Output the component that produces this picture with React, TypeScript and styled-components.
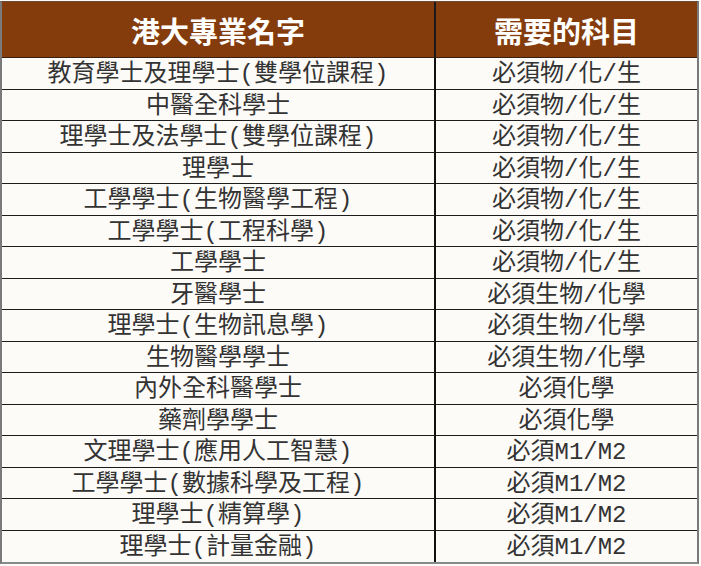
import React from 'react';
import styled, { createGlobalStyle } from 'styled-components';

const GlobalStyle = createGlobalStyle`
  html, body {
    margin: 0;
    padding: 0;
    background: #fbfbf8;
  }
`;

const Page = styled.div`
  padding: 1px 0 0 0;
`;

const Table = styled.div`
  display: grid;
  grid-template-columns: 434px 1fr;
  width: 699px;
  border-top: 1px solid #6a4a38;
  border-left: 2px solid #7a7a7a;
  border-right: 2px solid #7a7a7a;
  border-bottom: 2px solid #8a8a8a;
  box-sizing: border-box;
  background: #fcfbf8;
`;

const HeadCell = styled.div<{ $last?: boolean }>`
  height: 56px;
  display: flex;
  align-items: center;
  justify-content: center;
  background: #843c0c;
  color: #ffffff;
  font-family: 'Noto Sans CJK TC', 'Noto Sans', sans-serif;
  font-weight: 700;
  font-size: 29px;
  border-right: ${(p) => (p.$last ? 'none' : '2px solid #1a1a1a')};
  border-bottom: 1px solid #3a2010;
  box-sizing: border-box;
`;

const Cell = styled.div<{ $last?: boolean; $end?: boolean }>`
  height: 31.5px;
  padding-top: 4px;
  display: flex;
  align-items: center;
  justify-content: center;
  color: #333333;
  font-family: 'Liberation Mono', 'Noto Sans CJK TC', monospace;
  font-size: 24px;
  line-height: 1;
  border-right: ${(p) => (p.$last ? 'none' : '2px solid #111')};
  border-bottom: ${(p) => (p.$end ? 'none' : '1px solid #1c1c1c')};
  box-sizing: border-box;
  white-space: nowrap;
`;

const rows: [string, string][] = [
  ['教育學士及理學士(雙學位課程)', '必須物/化/生'],
  ['中醫全科學士', '必須物/化/生'],
  ['理學士及法學士(雙學位課程)', '必須物/化/生'],
  ['理學士', '必須物/化/生'],
  ['工學學士(生物醫學工程)', '必須物/化/生'],
  ['工學學士(工程科學)', '必須物/化/生'],
  ['工學學士', '必須物/化/生'],
  ['牙醫學士', '必須生物/化學'],
  ['理學士(生物訊息學)', '必須生物/化學'],
  ['生物醫學學士', '必須生物/化學'],
  ['內外全科醫學士', '必須化學'],
  ['藥劑學學士', '必須化學'],
  ['文理學士(應用人工智慧)', '必須M1/M2'],
  ['工學學士(數據科學及工程)', '必須M1/M2'],
  ['理學士(精算學)', '必須M1/M2'],
  ['理學士(計量金融)', '必須M1/M2'],
];

export default function App() {
  return (
    <Page>
      <GlobalStyle />
      <Table>
        <HeadCell>港大專業名字</HeadCell>
        <HeadCell $last>需要的科目</HeadCell>
        {rows.map(([name, subj], i) => {
          const end = i === rows.length - 1;
          return (
            <React.Fragment key={name}>
              <Cell $end={end}>{name}</Cell>
              <Cell $last $end={end}>
                {subj}
              </Cell>
            </React.Fragment>
          );
        })}
      </Table>
    </Page>
  );
}
